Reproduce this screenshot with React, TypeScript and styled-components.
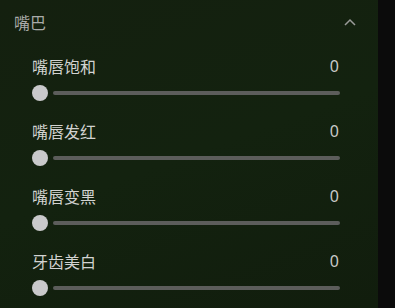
import React from "react";
import styled, { createGlobalStyle } from "styled-components";

const GlobalStyle = createGlobalStyle`
  html, body {
    margin: 0;
    padding: 0;
    background: #0b0b0b;
  }
  body {
    font-family: "Noto Sans CJK SC", "Noto Sans", sans-serif;
  }
`;

const Page = styled.div`
  display: flex;
  width: 395px;
  height: 308px;
  overflow: hidden;
  background: #0b0b0b;
`;

const Panel = styled.section`
  width: 378px;
  height: 308px;
  background: linear-gradient(160deg, #14200f 0%, #13220f 50%, #111d0d 100%);
  display: flex;
  flex-direction: column;
`;

const Header = styled.div`
  height: 44px;
  display: flex;
  align-items: center;
  justify-content: space-between;
  padding: 0 22px 0 14px;
  flex-shrink: 0;
`;

const Title = styled.span`
  font-size: 16px;
  line-height: 22px;
  color: #a9aaa8;
`;

const Chevron = styled.svg`
  width: 12px;
  height: 8px;
  display: block;
`;

const List = styled.div`
  display: flex;
  flex-direction: column;
  gap: 19.5px;
  padding: 11px 38px 0 32px;
`;

const Row = styled.div`
  display: flex;
  flex-direction: column;
  gap: 7.5px;
`;

const LabelLine = styled.div`
  display: flex;
  justify-content: space-between;
  align-items: center;
  height: 22px;
`;

const Label = styled.span`
  font-size: 16px;
  line-height: 22px;
  color: #d2d3d1;
`;

const Value = styled.span`
  font-family: "Noto Sans", sans-serif;
  font-size: 16px;
  line-height: 22px;
  color: #c9cac8;
  padding-right: 1px;
`;

const Slider = styled.div`
  display: flex;
  align-items: center;
  gap: 5px;
  height: 16px;
`;

const Thumb = styled.div`
  width: 16px;
  height: 16px;
  border-radius: 50%;
  background: #c9c9cb;
  flex-shrink: 0;
`;

const Rail = styled.div`
  flex: 1;
  height: 4px;
  border-radius: 2px;
  background: #5c5d5b;
`;

const items = [
  { label: "嘴唇饱和", value: 0 },
  { label: "嘴唇发红", value: 0 },
  { label: "嘴唇变黑", value: 0 },
  { label: "牙齿美白", value: 0 },
];

export default function App() {
  return (
    <Page>
      <GlobalStyle />
      <Panel>
        <Header>
          <Title>嘴巴</Title>
          <Chevron viewBox="0 0 12 8">
            <path d="M1 7 L6 2 L11 7" fill="none" stroke="#9a9b99" strokeWidth="1.5" />
          </Chevron>
        </Header>
        <List>
          {items.map((item) => (
            <Row key={item.label}>
              <LabelLine>
                <Label>{item.label}</Label>
                <Value>{item.value}</Value>
              </LabelLine>
              <Slider>
                <Thumb />
                <Rail />
              </Slider>
            </Row>
          ))}
        </List>
      </Panel>
    </Page>
  );
}
